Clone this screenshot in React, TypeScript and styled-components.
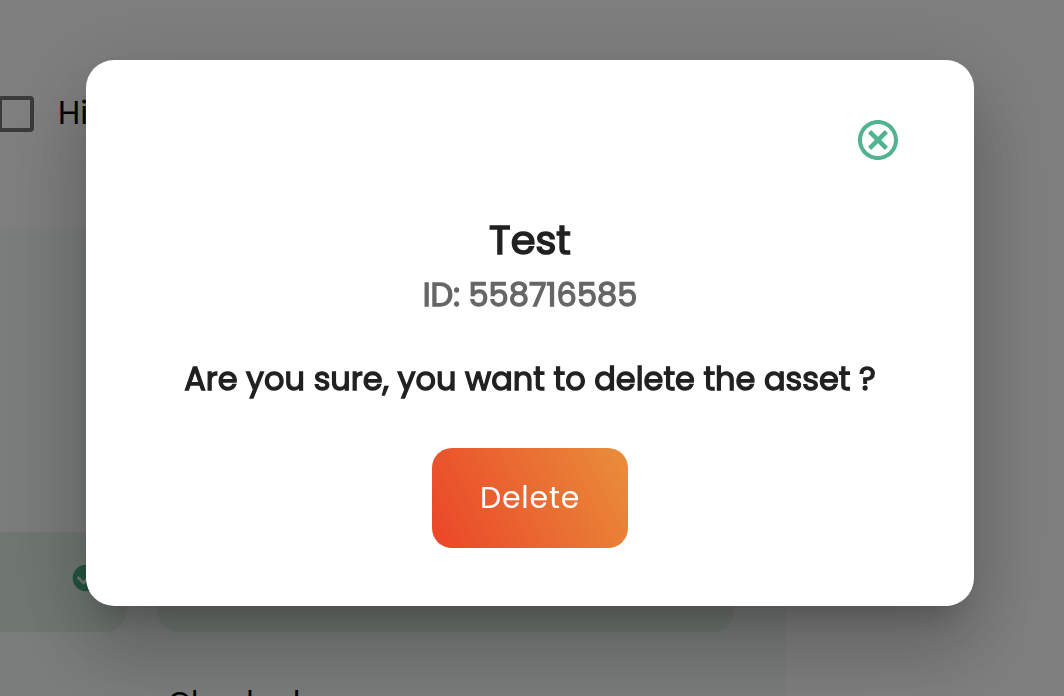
import React from "react";
import styled, { createGlobalStyle } from "styled-components";

const GlobalStyle = createGlobalStyle`
  * { box-sizing: border-box; }
  html, body { margin: 0; height: 100%; overflow: hidden; }
  body { background: #fff; font-family: Poppins, Inter, "Liberation Sans", sans-serif; }
  h2, p { margin: 0; }
`;

const Page = styled.main`
  height: 100vh;
  overflow: hidden;
  display: flex;
  flex-direction: column;
`;

const FilterRow = styled.label`
  flex: none;
  height: 228px;
  display: flex;
  align-items: center;
  gap: 24px;
  font-size: 32px;
  color: #000;
  white-space: nowrap;
`;

const CheckBox = styled.span`
  width: 36px;
  height: 36px;
  margin-left: -2px;
  border: 4px solid #757575;
  border-radius: 4px;
`;

const FilterLabel = styled.span`
  padding-bottom: 2px;
`;

const Panel = styled.section`
  flex: 1;
  width: 786px;
  padding-top: 304px;
  background: #f5faf8;
`;

const Tiles = styled.div`
  display: grid;
  grid-template-columns: 126px 576px;
  column-gap: 32px;
`;

const Tile = styled.div<{ $first?: boolean }>`
  height: 100px;
  display: flex;
  align-items: center;
  justify-content: flex-end;
  padding: 0 24px 8px;
  background: #e1efe5;
  border-radius: ${({ $first }) => ($first ? "0 20px 20px 0" : "20px")};
`;

const Caption = styled.p`
  padding: 49px 0 0 168px;
  font-size: 30px;
  line-height: 44px;
  letter-spacing: -0.2px;
  white-space: nowrap;
`;

const Backdrop = styled.div`
  position: fixed;
  inset: 0;
  display: flex;
  align-items: flex-start;
  padding: 60px 90px 0 86px;
  background: rgba(0, 0, 0, 0.5);
`;

const Dialog = styled.div`
  width: 888px;
  height: 546px;
  display: flex;
  flex-direction: column;
  align-items: center;
  padding: 56px 72px 0;
  border-radius: 28px;
  background: #fff;
  color: #212121;
  box-shadow:
    0 22px 30px -14px rgba(0, 0, 0, 0.2),
    0 48px 76px 6px rgba(0, 0, 0, 0.14),
    0 18px 92px 16px rgba(0, 0, 0, 0.12);
`;

const CloseButton = styled.button`
  align-self: flex-end;
  width: 48px;
  height: 48px;
  padding: 0;
  border: 0;
  background: none;
  color: #52b391;
`;

const Icon = styled.svg<{ $size: number }>`
  display: block;
  flex: none;
  width: ${({ $size }) => $size}px;
  height: ${({ $size }) => $size}px;
  fill: currentColor;
`;

const CheckIcon = styled(Icon)`
  color: #4aaa86;
`;

const Title = styled.h2`
  margin-top: 46px;
  font-size: 40px;
  line-height: 60px;
  font-weight: 400;
  -webkit-text-stroke: 1.6px currentColor;
`;

const AssetId = styled.p`
  font-size: 32px;
  line-height: 50px;
  font-weight: 400;
  -webkit-text-stroke: 1.3px currentColor;
  color: #666;
`;

const Question = styled.p`
  margin-top: 34px;
  font-size: 32px;
  line-height: 50px;
  font-weight: 400;
  -webkit-text-stroke: 1.3px currentColor;
  white-space: nowrap;
`;

const DeleteButton = styled.button`
  width: 196px;
  height: 100px;
  margin-top: 44px;
  padding: 0;
  border: 0;
  border-radius: 20px;
  background: linear-gradient(64deg, #eb4528 0%, #e98e3b 100%);
  color: #fff;
  font: 400 30px/48px Poppins, Inter, "Liberation Sans", sans-serif;
  letter-spacing: 0.8px;
`;

export default function App() {
  return (
    <>
      <GlobalStyle />
      <Page>
        <FilterRow>
          <CheckBox />
          <FilterLabel>Hi</FilterLabel>
        </FilterRow>
        <Panel>
          <Tiles>
            <Tile $first>
              <CheckIcon $size={32} viewBox="0 0 24 24">
                <path d="M12 2C6.48 2 2 6.48 2 12s4.48 10 10 10 10-4.48 10-10S17.52 2 12 2zm-2 15l-5-5 1.41-1.41L10 14.17l7.59-7.59L19 8l-9 9z" />
              </CheckIcon>
            </Tile>
            <Tile />
          </Tiles>
          <Caption>Checked</Caption>
        </Panel>
      </Page>
      <Backdrop>
        <Dialog role="dialog" aria-modal="true">
          <CloseButton aria-label="Close">
            <Icon $size={48} viewBox="0 0 24 24">
              <path d="M12 2C6.47 2 2 6.47 2 12s4.47 10 10 10 10-4.47 10-10S17.53 2 12 2zm0 18c-4.41 0-8-3.59-8-8s3.59-8 8-8 8 3.59 8 8-3.59 8-8 8z" />
              <path d="M7.8 7.8l8.4 8.4M16.2 7.8l-8.4 8.4" stroke="currentColor" strokeWidth="2.25" />
            </Icon>
          </CloseButton>
          <Title>Test</Title>
          <AssetId>ID: 558716585</AssetId>
          <Question>Are you sure, you want to delete the asset ?</Question>
          <DeleteButton>Delete</DeleteButton>
        </Dialog>
      </Backdrop>
    </>
  );
}
